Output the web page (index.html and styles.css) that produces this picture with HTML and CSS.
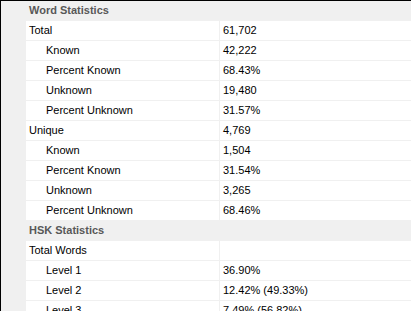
FILE: index.html
```html
<!DOCTYPE html>
<html>
<head>
<meta charset="utf-8">
<link rel="stylesheet" href="styles.css">
</head>
<body>
<div class="grid">
  <div class="row cat"><div class="margin"></div><div class="label">Word Statistics</div></div>
  <div class="row"><div class="margin"></div><div class="label">Total</div><div class="value">61,702</div></div>
  <div class="row"><div class="margin"></div><div class="label sub">Known</div><div class="value">42,222</div></div>
  <div class="row"><div class="margin"></div><div class="label sub">Percent Known</div><div class="value">68.43%</div></div>
  <div class="row"><div class="margin"></div><div class="label sub">Unknown</div><div class="value">19,480</div></div>
  <div class="row"><div class="margin"></div><div class="label sub">Percent Unknown</div><div class="value">31.57%</div></div>
  <div class="row"><div class="margin"></div><div class="label">Unique</div><div class="value">4,769</div></div>
  <div class="row"><div class="margin"></div><div class="label sub">Known</div><div class="value">1,504</div></div>
  <div class="row"><div class="margin"></div><div class="label sub">Percent Known</div><div class="value">31.54%</div></div>
  <div class="row"><div class="margin"></div><div class="label sub">Unknown</div><div class="value">3,265</div></div>
  <div class="row"><div class="margin"></div><div class="label sub">Percent Unknown</div><div class="value">68.46%</div></div>
  <div class="row cat"><div class="margin"></div><div class="label">HSK Statistics</div></div>
  <div class="row"><div class="margin"></div><div class="label">Total Words</div><div class="value"></div></div>
  <div class="row"><div class="margin"></div><div class="label sub">Level 1</div><div class="value">36.90%</div></div>
  <div class="row"><div class="margin"></div><div class="label sub">Level 2</div><div class="value">12.42% (49.33%)</div></div>
  <div class="row"><div class="margin"></div><div class="label sub">Level 3</div><div class="value">7.49% (56.82%)</div></div>
</div>
</body>
</html>
```
FILE: styles.css
```css
html, body {
  margin: 0;
  padding: 0;
  background: #ffffff;
  overflow: hidden;
}
body {
  font-family: "Liberation Sans", Arial, sans-serif;
  font-size: 11px;
  color: #000000;
}
.grid {
  border-top: 1px solid #000000;
  border-left: 1px solid #000000;
  height: 310px;
  overflow: hidden;
}
.row {
  display: flex;
  height: 19px;
  line-height: 19px;
  border-bottom: 1px solid #f0f0f0;
  background: #ffffff;
}
.margin {
  width: 25px;
  flex: none;
  background: #f0f0f0;
}
.label {
  width: 190px;
  flex: none;
  padding-left: 3px;
  border-right: 1px solid #f0f0f0;
  white-space: nowrap;
}
.label.sub {
  padding-left: 20px;
  width: 173px;
}
.value {
  flex: 1;
  padding-left: 3px;
  white-space: nowrap;
}
.row.cat {
  background: #f0f0f0;
}
.row.cat .label {
  font-weight: bold;
  color: #585858;
  border-right: none;
  width: auto;
  flex: 1;
}
```
